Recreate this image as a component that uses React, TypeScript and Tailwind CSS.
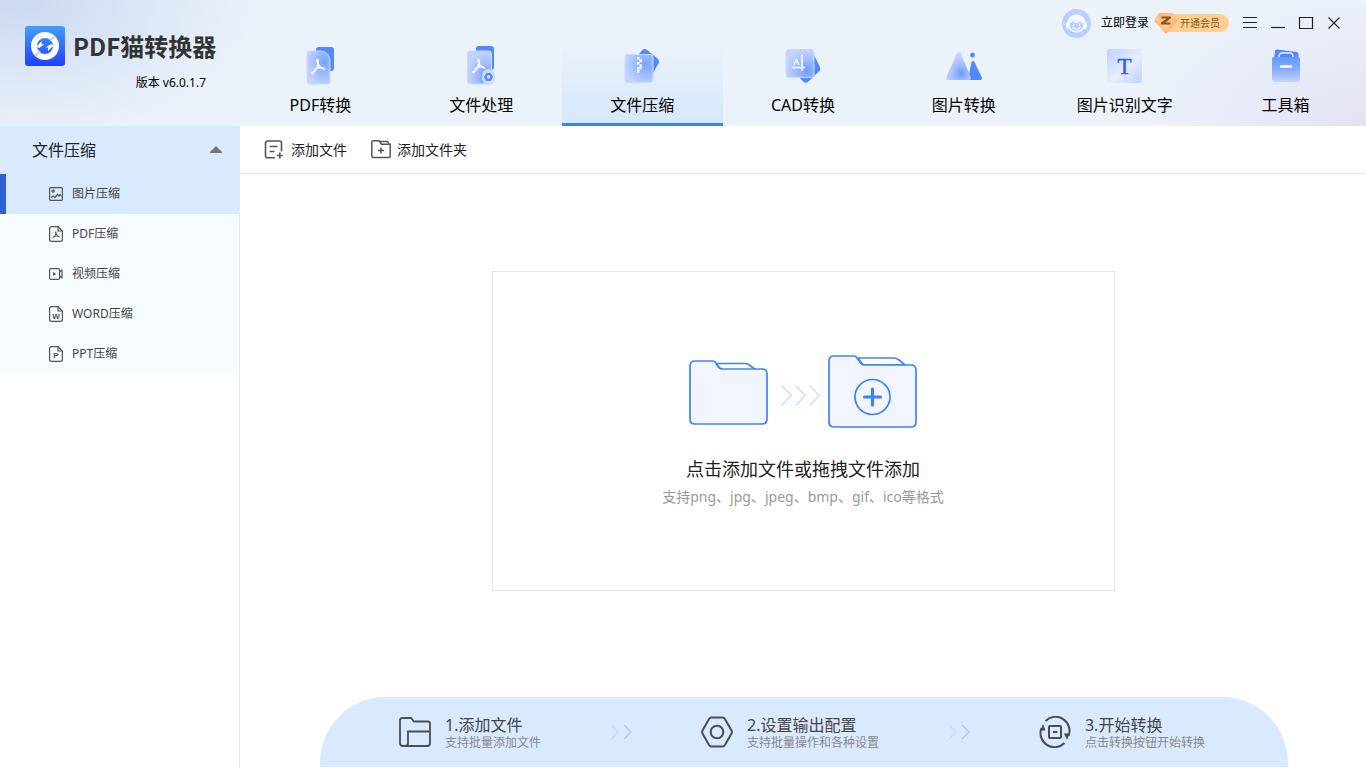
import React, { useState } from 'react';

interface IconProps {
  className?: string;
}

interface NavTab {
  id: string;
  label: string;
  icon: React.ReactNode;
}

interface SideItem {
  id: string;
  label: string;
  icon: React.ReactNode;
}

interface Step {
  title: string;
  hint: string;
  icon: React.ReactNode;
}

// Shared fills for the header icons
const Gradients = () => (
  <svg className="absolute h-0 w-0" aria-hidden="true">
    <defs>
      <radialGradient id="glassRight" cx="0.75" cy="0.35" r="0.75">
        <stop offset="0" stopColor="#78a4fd" />
        <stop offset="0.5" stopColor="#9dbcff" />
        <stop offset="1" stopColor="#c2d3ff" />
      </radialGradient>
      <radialGradient id="glassCorner" cx="0.75" cy="0.75" r="0.75">
        <stop offset="0" stopColor="#6c9dfc" />
        <stop offset="0.5" stopColor="#9fbdff" />
        <stop offset="1" stopColor="#c2d3ff" />
      </radialGradient>
      <radialGradient id="peak" cx="0.6" cy="0.75" r="0.6">
        <stop offset="0" stopColor="#6c9dfc" />
        <stop offset="0.5" stopColor="#9fbdff" />
        <stop offset="1" stopColor="#c2d3ff" />
      </radialGradient>
      <linearGradient id="tile" x1="0" y1="0" x2="1" y2="1">
        <stop offset="0" stopColor="#bfd0ff" />
        <stop offset="0.55" stopColor="#e6edff" />
        <stop offset="1" stopColor="#bfcfff" />
      </linearGradient>
      <linearGradient id="bag" x1="0" y1="0" x2="0" y2="1">
        <stop offset="0" stopColor="#6599fd" />
        <stop offset="0.5" stopColor="#84adff" />
        <stop offset="1" stopColor="#c5d5ff" />
      </linearGradient>
      <linearGradient id="logo" x1="0" y1="0" x2="0" y2="1">
        <stop offset="0" stopColor="#459df8" />
        <stop offset="1" stopColor="#2040ff" />
      </linearGradient>
      <linearGradient id="gem" x1="0" y1="0" x2="1" y2="1">
        <stop offset="0" stopColor="#ffb070" />
        <stop offset="0.5" stopColor="#ffc588" />
        <stop offset="1" stopColor="#ff9670" />
      </linearGradient>
    </defs>
  </svg>
);

const LogoIcon = () => (
  <svg className="h-10 w-10 shrink-0" viewBox="0 0 40 40" fill="none">
    <rect width="40" height="40" rx="3" fill="url(#logo)" />
    <circle cx="20" cy="20" r="11" stroke="#fff" strokeWidth="6" />
    <path d="M25 14.500l4.500-4M10.500 29.500L15 25" stroke="#c3cfe6" strokeWidth="1.800" />
    <path d="M11.500 20.500l5.500-5.500v3.500h2.500L14 22z" fill="#fff" />
    <path d="M28.500 19.500L23 25v-3.500h-2.500L26 18z" fill="#fff" />
  </svg>
);

const PdfTabIcon = () => (
  <svg className="h-10 w-10" viewBox="0 0 40 40" fill="none">
    <rect x="16" y="2" width="18" height="24" rx="3" fill="#4f89fb" />
    <path d="M9.500 6H20c6 0 10 4 10 10v20.500a2.500 2.500 0 0 1-2.500 2.500h-18A2.500 2.500 0 0 1 7 36.500v-28A2.500 2.500 0 0 1 9.500 6z" fill="url(#glassRight)" stroke="#cbdaff" />
    <path d="M17.500 15c1 5 0 9-5 13M17.500 15c0 5 2 8 7 9M14 25c3-2 6-3 9-2" stroke="#fff" strokeWidth="1.500" strokeLinecap="round" />
    <circle cx="17.500" cy="15.500" r="1.500" fill="#fff" />
    <circle cx="12.500" cy="28" r="1.300" fill="#fff" />
  </svg>
);

const ProcessTabIcon = () => (
  <svg className="h-10 w-10" viewBox="0 0 40 40" fill="none">
    <rect x="15" y="1" width="18" height="24" rx="3" fill="#4f89fb" />
    <rect x="6.500" y="6" width="24" height="33" rx="2.500" fill="url(#glassCorner)" stroke="#cbdaff" />
    <path d="M17.500 15c1 5 0 8-5 12M17.500 15c0 5 2 7 6 8M14 24c3-2 6-3 8-2" stroke="#fff" strokeWidth="1.500" strokeLinecap="round" />
    <circle cx="17.500" cy="15.500" r="1.500" fill="#fff" />
    <circle cx="12.500" cy="27" r="1.300" fill="#fff" />
    <ellipse cx="27.500" cy="32" rx="6.500" ry="8" fill="#c9dbff" />
    <path d="M25.500 28.500h4l2 3.500-2 3.500h-4l-2-3.500z" fill="#4f89fb" stroke="#4f89fb" strokeLinejoin="round" />
    <circle cx="27.500" cy="32" r="1.800" fill="#d7e4ff" />
  </svg>
);

const CompressTabIcon = () => (
  <svg className="h-10 w-10" viewBox="0 0 40 40" fill="none">
    <path d="M17 9l3-3.500q2-2.500 5-.5l10 8q3 2.500 1.500 5.500L30 30H20z" fill="#4f89fb" />
    <rect x="3" y="9.500" width="28" height="28" rx="2.500" fill="url(#glassRight)" stroke="#c9daff" />
    <path d="M15 12h2.500v2.500H15zM17.500 14.500H20V17h-2.500zM15 17h2.500v2.500H15zM17.500 19.500H20V22h-2.500zM15 22h2.500v2.500H15zM15 25h2.500v2.500H15z" fill="#fff" />
    <path d="M17.500 22H20v2.500h-2.500z" fill="#fff" opacity="0.6" />
  </svg>
);

const CadTabIcon = () => (
  <svg className="h-10 w-10" viewBox="0 0 40 40" fill="none">
    <path d="M30 10l2 2 5 10q1 3-1.500 5L25.500 36.500q-3 2.500-5.500 0L15 31z" fill="#4f89fb" />
    <rect x="3" y="4.500" width="28" height="28" rx="2.500" fill="url(#glassCorner)" stroke="#c9daff" />
    <text x="10" y="20" fill="#fff" fontSize="9" fontWeight="700" fontFamily="Liberation Sans, sans-serif">A</text>
    <path d="M19 10v16M9 22.500h13" stroke="#fff" strokeWidth="1.500" />
  </svg>
);

const ImageTabIcon = () => (
  <svg className="h-10 w-10" viewBox="0 0 40 40" fill="none">
    <circle cx="28.500" cy="10" r="2.400" fill="#4f89fb" />
    <path d="M27.500 17q1.500-2 3 0L38 33q0 2-1.500 2H24z" fill="#4f89fb" />
    <path d="M13 8.500q2-3 4 0L27 33q0 2-2 2H4q-2.500 0-2-2z" fill="url(#peak)" />
  </svg>
);

const OcrTabIcon = () => (
  <svg className="h-10 w-10" viewBox="0 0 40 40" fill="none">
    <rect x="2" y="4" width="35" height="34" rx="3" fill="url(#tile)" />
    <text x="19.500" y="29" textAnchor="middle" fill="#3366dd" stroke="#3366dd" strokeWidth="0.500" fontSize="23" fontFamily="Liberation Serif, serif">T</text>
  </svg>
);

const ToolboxTabIcon = () => (
  <svg className="h-10 w-10" viewBox="0 0 40 40" fill="none">
    <path d="M9 6q0-1.500 2-1.500l20 2.500q1.500.5 1.500 2v6H8z" fill="#4f89fb" />
    <path d="M8 12h24q2 0 2 3v19q0 3-3 3H9q-3 0-3-3V14q0-2 2-2z" fill="url(#bag)" />
    <path d="M13 12q0-4 3-4h8q3 0 3 4" stroke="#e9f1ff" strokeWidth="1.500" />
    <path d="M15 21.500h10" stroke="#fff" strokeWidth="2.500" strokeLinecap="round" />
  </svg>
);

const AvatarIcon = () => (
  <svg className="h-[29px] w-[29px] shrink-0" viewBox="0 0 29 29" fill="none">
    <circle cx="14.500" cy="14.500" r="14.500" fill="#b9cfff" />
    <rect x="4" y="13" width="4" height="7" rx="2" fill="#f5f9ff" />
    <rect x="21" y="13" width="4" height="7" rx="2" fill="#f5f9ff" />
    <circle cx="14.500" cy="14.500" r="9.300" fill="#f5f9ff" />
    <path d="M7.500 14.500q2-.5 3-2.500 1.500 2 4 2 2.500-.5 3.500-2 1 2 3.500 2.500 0 7-7 7.500-7-.5-7-7.500z" fill="#b9cfff" />
    <path d="M11 18.500q3.500 3.500 7 0" stroke="#f5f9ff" strokeWidth="1.200" strokeLinecap="round" />
    <path d="M11.500 15v1.500M17.500 15v1.500" stroke="#f5f9ff" strokeWidth="1.200" strokeLinecap="round" />
  </svg>
);

const GemIcon = () => (
  <svg className="relative h-[22px] w-6 shrink-0" viewBox="0 0 24 22" fill="none">
    <path d="M6 1h12q1.500 0 2.500 1.500L23.500 8q.5 1-.5 2L13 21q-1 1-2 0L1 10q-1-1-.5-2L4 2.500Q4.500 1 6 1z" fill="url(#gem)" />
    <path d="M5 2L1 9l4-1zM12 21l-6-11 12 0z" fill="#ffd5a5" opacity="0.5" />
    <path d="M7.500 5.500h8.500l-8 6h8.500" stroke="#85541f" strokeWidth="2.200" strokeLinejoin="round" />
  </svg>
);

const DocIcon: React.FC<{ children: React.ReactNode }> = ({ children }) => (
  <svg className="h-4 w-[14px] shrink-0" viewBox="0 0 14 16" fill="none" stroke="#555" strokeWidth="1.200">
    <path d="M2.500.600H9l4.400 4.400v8.500a1.900 1.900 0 0 1-1.900 1.900h-9A1.900 1.900 0 0 1 .600 13.500v-11A1.900 1.900 0 0 1 2.500.600z" />
    <path d="M9 .800V5h4.200" />
    {children}
  </svg>
);

const PictureIcon = () => (
  <svg className="h-4 w-[14px] shrink-0" viewBox="0 0 14 16" fill="none" stroke="#555" strokeWidth="1.200">
    <rect x="0.600" y="1.600" width="12.800" height="12.800" rx="1" />
    <circle cx="4.200" cy="5" r="1.100" />
    <path d="M2 11.500l2-1.500 2 1.500 2.500-3 1.500 1.500 1-1.500 1.500 2" />
  </svg>
);

const VideoIcon = () => (
  <svg className="h-4 w-[14px] shrink-0" viewBox="0 0 14 16" fill="none" stroke="#555" strokeWidth="1.200">
    <rect x="0.600" y="2.600" width="10" height="10.800" rx="1.500" />
    <path d="M10.600 6l2.400-1.800v7.600L10.600 10" />
    <path d="M4 6v4l3.200-2z" fill="#555" stroke="none" />
  </svg>
);

const AddFileIcon = () => (
  <svg className="h-5 w-5" viewBox="0 0 20 20" fill="none" stroke="#555" strokeWidth="1.600">
    <path d="M11 17.200H3.500a2 2 0 0 1-2-2V2.500a2 2 0 0 1 2-2h12a2 2 0 0 1 2 2V11" transform="translate(0 .5)" />
    <path d="M5.500 6.500h8M5.500 11.500h5M15.800 12.500v6M12.800 15.500h6" />
  </svg>
);

const AddFolderIcon = () => (
  <svg className="h-5 w-5" viewBox="0 0 20 20" fill="none" stroke="#555" strokeWidth="1.500">
    <path d="M2.500.700H8l2.500 3.600h8.700v11.700a1.500 1.500 0 0 1-1.500 1.500H2.300a1.500 1.500 0 0 1-1.500-1.500V2.300q0-1.600 1.700-1.600z" />
    <path d="M9 1.500h7.500L18 4.200M10 7.500v6M7 10.500h6" />
  </svg>
);

const StepFolderIcon = () => (
  <svg className="h-8 w-8 shrink-0" viewBox="0 0 32 32" fill="none" stroke="#4a4d52" strokeWidth="1.800">
    <path d="M4 2h8l3 3.500h14q2 0 2 2V27q0 3-3 3H4q-3 0-3-3V4q0-2 3-2z" />
    <path d="M31 15.500H9V27q0 3-3 3" />
  </svg>
);

const StepConfigIcon = () => (
  <svg className="h-8 w-8 shrink-0" viewBox="0 0 32 32" fill="none" stroke="#4a4d52" strokeWidth="2">
    <path d="M10.500 1.500h11q1.500 0 2.500 1.500l6.500 11.500q.8 1.500 0 3L24 29q-1 1.500-2.500 1.500h-11Q9 30.500 8 29L1.500 17.500q-.8-1.500 0-3L8 3q1-1.500 2.500-1.500z" />
    <circle cx="16" cy="16" r="6.300" />
  </svg>
);

const StepConvertIcon = () => (
  <svg className="h-8 w-8 shrink-0" viewBox="0 0 32 32" fill="none" stroke="#4a4d52" strokeWidth="2">
    <path d="M6.500 5a14 14 0 0 1 23 15M25.500 27A14 14 0 0 1 2.500 12" />
    <path d="M25 17.500h5.500L28 24zM1.500 14.500L4 8l2.500 6.500z" fill="#4a4d52" stroke="none" />
    <rect x="10" y="10" width="12" height="12" rx="1" />
    <path d="M14 16h4.500" />
  </svg>
);

const StepArrow: React.FC<IconProps> = ({ className }) => (
  <svg className={className} viewBox="0 0 22 16" fill="none" strokeWidth="1.500">
    <path d="M1 1l7 7-7 7" stroke="#c9d7fb" />
    <path d="M14 1l7 7-7 7" stroke="#b3c5fa" />
  </svg>
);

const UploadArt = () => (
  <svg className="h-[74px] w-[228px]" viewBox="0 0 228 74" fill="none" stroke="#3f82f8" strokeWidth="1.700" strokeLinejoin="round">
    <path d="M27 8.500h29q3 0 5 2l6 4.500H32z" fill="#fff" />
    <path d="M6 6h18q2 0 3 2.500l2 3q1.500 2.500 5 2.500h39q5 0 5 5v45q0 5-5 5H6q-5 0-5-5V11q0-5 5-5z" fill="#f0f5ff" />
    <path d="M92.500 30.500l10 10-10 10M106.500 30.500l10 10-10 10M120.500 30.500l10 10-10 10" stroke="#c9dafd" strokeWidth="1.400" />
    <path d="M169 3h36q2 0 5 2l6 5h-42z" fill="#fff" />
    <path d="M145 1h20q2 0 3 2l3 4q1.500 3 5 3h46q5 0 5 5v52q0 5-5 5h-77q-5 0-5-5V6q0-5 5-5z" fill="#f0f5ff" />
    <circle cx="183.500" cy="42" r="17.500" />
    <path d="M183.500 34v16M175.500 42h16" strokeWidth="3.200" strokeLinecap="round" />
  </svg>
);

const tabs: NavTab[] = [
  { id: 'pdf', label: 'PDF转换', icon: <PdfTabIcon /> },
  { id: 'process', label: '文件处理', icon: <ProcessTabIcon /> },
  { id: 'compress', label: '文件压缩', icon: <CompressTabIcon /> },
  { id: 'cad', label: 'CAD转换', icon: <CadTabIcon /> },
  { id: 'image', label: '图片转换', icon: <ImageTabIcon /> },
  { id: 'ocr', label: '图片识别文字', icon: <OcrTabIcon /> },
  { id: 'tools', label: '工具箱', icon: <ToolboxTabIcon /> },
];

const sideItems: SideItem[] = [
  { id: 'image', label: '图片压缩', icon: <PictureIcon /> },
  {
    id: 'pdf',
    label: 'PDF压缩',
    icon: (
      <DocIcon>
        <path d="M6.800 5.500c.3 3-1 5-3.300 6.500M6.800 6c.2 3 1.500 4.500 4 5M4.500 11c2-1 4-1.300 5.500-.8" strokeWidth="1" />
      </DocIcon>
    ),
  },
  { id: 'video', label: '视频压缩', icon: <VideoIcon /> },
  {
    id: 'word',
    label: 'WORD压缩',
    icon: (
      <DocIcon>
        <text x="7" y="13" textAnchor="middle" fill="#555" stroke="none" fontSize="8" fontWeight="700" fontFamily="Liberation Sans, sans-serif">W</text>
      </DocIcon>
    ),
  },
  {
    id: 'ppt',
    label: 'PPT压缩',
    icon: (
      <DocIcon>
        <text x="7" y="12" textAnchor="middle" fill="#555" stroke="none" fontSize="8" fontWeight="700" fontFamily="Liberation Sans, sans-serif">P</text>
      </DocIcon>
    ),
  },
];

const steps: Step[] = [
  { title: '1.添加文件', hint: '支持批量添加文件', icon: <StepFolderIcon /> },
  { title: '2.设置输出配置', hint: '支持批量操作和各种设置', icon: <StepConfigIcon /> },
  { title: '3.开始转换', hint: '点击转换按钮开始转换', icon: <StepConvertIcon /> },
];

const WindowButton: React.FC<{ label: string; path: string }> = ({ label, path }) => (
  <button type="button" aria-label={label} className="flex h-7 w-7 items-center justify-center">
    <svg className="h-4 w-4" viewBox="0 0 16 16" fill="none" stroke="#222" strokeWidth="1.200">
      <path d={path} />
    </svg>
  </button>
);

const App: React.FC = () => {
  const [activeTab, setActiveTab] = useState('compress');
  const [activeItem, setActiveItem] = useState('image');
  const [open, setOpen] = useState(true);

  return (
    <div className="flex min-h-screen flex-col bg-white font-['Noto_Sans','Noto_Sans_CJK_SC',sans-serif] text-black">
      <Gradients />

      <header className="flex bg-[#ebf2fa] bg-[radial-gradient(ellipse_240px_140px_at_20px_0px,#cbd9f2,transparent),radial-gradient(ellipse_220px_130px_at_100%_100%,#e3e2f5,transparent)]">
        <div className="w-60 shrink-0 pl-[25px] pt-[26px]">
          <div className="flex items-center gap-2">
            <LogoIcon />
            <h1 className="font-['Noto_Sans_CJK_SC',sans-serif] text-2xl font-bold text-[#333]">PDF猫转换器</h1>
          </div>
          <p className="mt-2 pr-[34px] text-right text-xs leading-[18px]">版本 v6.0.1.7</p>
        </div>

        <div className="min-w-0 flex-1">
          <div className="flex h-[42px] items-center justify-end pr-[18px] pt-1">
            <button type="button" className="flex items-center gap-[10px] text-xs">
              <AvatarIcon />
              立即登录
            </button>
            <button type="button" className="ml-[5px] mr-[7px] flex items-center text-[10px] text-[#86551f]">
              <GemIcon />
              <span className="-ml-3 flex h-[18px] items-center rounded-r-full bg-[#ffcf91] pl-[14px] pr-[9px]">开通会员</span>
            </button>
            <WindowButton label="菜单" path="M1 2.500h14M1 7.500h14M1 12.500h14" />
            <WindowButton label="最小化" path="M1 12.500h14" />
            <WindowButton label="最大化" path="M1.500 2.500h13v11h-13z" />
            <WindowButton label="关闭" path="M2.500 2.500l11 11M13.500 2.500l-11 11" />
          </div>

          <nav className="flex h-[84px]">
            {tabs.map(tab => (
              <button
                key={tab.id}
                type="button"
                onClick={() => setActiveTab(tab.id)}
                className={`flex flex-1 basis-0 flex-col items-center gap-2 border-b-[3px] pt-[3px] text-base leading-6 ${
                  activeTab === tab.id
                    ? 'border-[#4080f5] bg-linear-to-b from-[#ebf2fa] to-[#d5e8fc]'
                    : 'border-transparent'
                }`}
              >
                {tab.icon}
                {tab.label}
              </button>
            ))}
          </nav>
        </div>
      </header>

      <div className="flex flex-1">
        <aside className="w-60 shrink-0 border-r border-[#e0e9f8]">
          <button
            type="button"
            aria-expanded={open}
            onClick={() => setOpen(!open)}
            className="flex h-12 w-full items-center justify-between bg-[#d9eaff] pl-8 pr-[17px] text-base text-[#222]"
          >
            文件压缩
            <svg className="h-2 w-3" viewBox="0 0 12 8" fill="#777">
              <path d="M6 0l6 6v1H0V6z" />
            </svg>
          </button>
          {open && (
            <ul className="bg-[#f5fbff]">
              {sideItems.map(item => (
                <li key={item.id}>
                  <button
                    type="button"
                    onClick={() => setActiveItem(item.id)}
                    className={`flex h-10 w-full items-center gap-[9px] border-l-[6px] pl-[43px] text-xs text-[#444] ${
                      activeItem === item.id ? 'border-[#2f60d5] bg-[#d9eaff]' : 'border-transparent'
                    }`}
                  >
                    {item.icon}
                    {item.label}
                  </button>
                </li>
              ))}
            </ul>
          )}
        </aside>

        <main className="flex min-w-0 flex-1 flex-col">
          <div className="flex h-12 items-center gap-6 border-b border-[#e0e9f8] px-6 text-sm text-[#222]">
            <button type="button" className="flex items-center gap-[7px]">
              <AddFileIcon />
              添加文件
            </button>
            <button type="button" className="flex items-center gap-[6px]">
              <AddFolderIcon />
              添加文件夹
            </button>
          </div>

          <div className="flex flex-1 items-center justify-center px-6 pb-[10px]">
            <button
              type="button"
              className="flex h-80 w-[623px] max-w-full flex-col items-center border border-[#e2e4e8] pt-[83px]"
            >
              <UploadArt />
              <span className="mt-[26px] text-lg leading-7 text-[#222]">点击添加文件或拖拽文件添加</span>
              <span className="mt-1 text-sm text-[#999]">支持png、jpg、jpeg、bmp、gif、ico等格式</span>
            </button>
          </div>

          <ol className="ml-20 mr-[78px] mb-px flex h-[70px] items-center justify-between rounded-t-[66px] bg-[#d9eaff] pl-[79px] pr-[83px]">
            {steps.map((step, i) => (
              <React.Fragment key={step.title}>
                {i > 0 && (
                  <li aria-hidden="true">
                    <StepArrow className="h-4 w-[22px]" />
                  </li>
                )}
                <li className="flex items-center gap-[14px]">
                  {step.icon}
                  <div className="pt-[3px]">
                    <p className="text-base leading-[18px] text-[#444]">{step.title}</p>
                    <p className="text-xs leading-[18px] text-[#888]">{step.hint}</p>
                  </div>
                </li>
              </React.Fragment>
            ))}
          </ol>
        </main>
      </div>
    </div>
  );
};

export default App;
